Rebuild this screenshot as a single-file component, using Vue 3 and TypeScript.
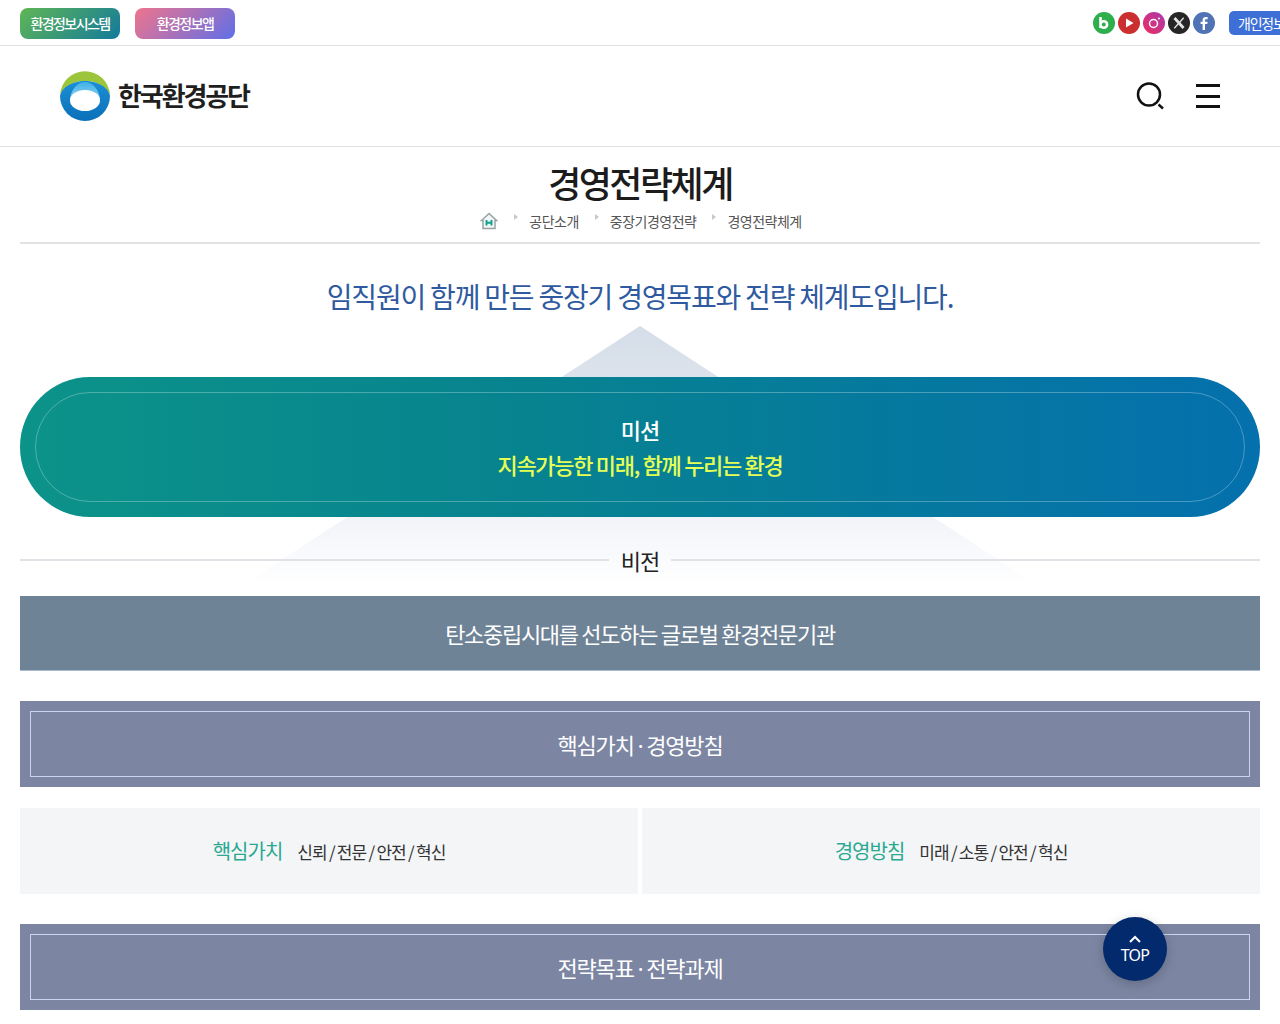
<script setup lang="ts">
const crumbs: string[] = ['공단소개', '중장기경영전략', '경영전략체계']
const cards = [
  { head: '핵심가치', body: '신뢰 / 전문 / 안전 / 혁신' },
  { head: '경영방침', body: '미래 / 소통 / 안전 / 혁신' },
]
</script>

<template>
  <div class="page">
    <div class="topbar">
      <div class="top-left">
        <a class="pill pill-a">환경정보시스템</a>
        <a class="pill pill-b">환경정보앱</a>
      </div>
      <div class="top-right">
        <div class="socials">
          <svg class="soc" viewBox="0 0 22 22"><circle cx="11" cy="11" r="11" fill="#2fae4e"/><path d="M7.500 5v11M7.500 12.500a3.300 3.300 0 1 1 6.600 0a3.300 3.300 0 1 1-6.600 0" fill="none" stroke="#fff" stroke-width="2.600"/></svg>
          <svg class="soc" viewBox="0 0 22 22"><circle cx="11" cy="11" r="11" fill="#c9302f"/><path d="M8 6.500l7.500 4.500L8 15.500z" fill="#fff"/></svg>
          <svg class="soc" viewBox="0 0 22 22"><defs><linearGradient id="ig" x1="0" y1="1" x2="1" y2="0"><stop offset="0" stop-color="#ef2b5f"/><stop offset="1" stop-color="#a93ab0"/></linearGradient></defs><circle cx="11" cy="11" r="11" fill="url(#ig)"/><circle cx="10.500" cy="11.500" r="4" fill="none" stroke="#fff" stroke-width="1.500"/><circle cx="16" cy="6.500" r="1" fill="#fff"/></svg>
          <svg class="soc" viewBox="0 0 22 22"><circle cx="11" cy="11" r="11" fill="#262626"/><path d="M6.500 6l9 10" stroke="#e4e4e4" stroke-width="2.800"/><path d="M15.700 5.800L6.300 16.200" stroke="#e4e4e4" stroke-width="1.300"/></svg>
          <svg class="soc" viewBox="0 0 22 22"><circle cx="11" cy="11" r="11" fill="#4f73b5"/><path d="M12 18v-6h2.300l.3-2.300H12V8.300c0-.7.3-1.100 1.100-1.100h1.500V5.100c-.5-.1-1.200-.1-1.900-.1c-1.900 0-3.100 1.100-3.100 3.100v1.600H7.600V12h2v6z" fill="#fff"/></svg>
        </div>
        <a class="privacy">개인정보처리방침</a>
      </div>
    </div>

    <header class="header">
      <div class="logo">
        <svg class="logo-mark" viewBox="0 0 50 50">
          <defs>
            <linearGradient id="ring" x1="0" y1="0" x2="0" y2="1"><stop offset="0" stop-color="#1c8fd6"/><stop offset="1" stop-color="#0a6fb8"/></linearGradient>
            <linearGradient id="sky" x1="0" y1="0" x2="0" y2="1"><stop offset="0" stop-color="#3fb0e6"/><stop offset="1" stop-color="#8fd4f0"/></linearGradient>
          </defs>
          <path d="M0.100 23A25 25 0 0 1 49.900 23C44 14 35 10 25 10S6 14 0.100 23z" fill="#9cc53c"/>
          <path d="M0 25C1 17 12 10 25 10S49 17 50 25A25 25 0 0 1 0 25z" fill="url(#ring)"/>
          <path d="M10 28C11 18 18 11 25 11S39 18 40 28z" fill="url(#sky)"/>
          <ellipse cx="25" cy="29.500" rx="15" ry="10.500" fill="#fff"/>
        </svg>
        <span class="logo-text">한국환경공단</span>
      </div>
      <div class="tools">
        <svg class="search" viewBox="0 0 30 30"><circle cx="13" cy="13.500" r="11" fill="none" stroke="#111" stroke-width="2.500"/><path d="M22.500 23.500l4.500 4" stroke="#111" stroke-width="2.500"/></svg>
        <div class="burger"><i></i><i></i><i></i></div>
      </div>
    </header>

    <main class="main">
      <div class="titlebox">
        <h1 class="title">경영전략체계</h1>
        <nav class="crumbs">
          <svg class="home" viewBox="0 0 18 18"><path d="M1.500 8.500L9 1.500l7.500 7H15V16.500H3V8.500z" fill="#f3f6f6" stroke="#9aa3a3" stroke-width="1.500"/><path d="M6.500 8v5.500M11.500 8v5.500M6.500 10.700h5" stroke="#12a08e" stroke-width="1.900" fill="none"/></svg>
          <template v-for="c in crumbs" :key="c">
            <span class="caret"></span>
            <span class="crumb">{{ c }}</span>
          </template>
        </nav>
      </div>

      <p class="lead">임직원이 함께 만든 중장기 경영목표와 전략 체계도입니다.</p>

      <div class="diagram">
        <div class="pyramid"></div>
        <section class="mission">
          <div class="mission-inner">
            <div class="mission-head">미션</div>
            <div class="mission-text">지속가능한 미래, 함께 누리는 환경</div>
          </div>
        </section>

        <div class="vision-head"><span>비전</span></div>
        <div class="vision">탄소중립시대를 선도하는 글로벌 환경전문기관</div>

        <div class="band"><div class="band-inner">핵심가치 · 경영방침</div></div>

        <div class="cards">
          <div v-for="c in cards" :key="c.head" class="card">
            <strong class="card-head">{{ c.head }}</strong>
            <span class="card-body">{{ c.body }}</span>
          </div>
        </div>

        <div class="band"><div class="band-inner">전략목표 · 전략과제</div></div>
      </div>
    </main>

    <a class="totop">
      <svg class="chev" viewBox="0 0 12 8"><path d="M1 7l5-5 5 5" fill="none" stroke="#fff" stroke-width="2"/></svg>
      <span>TOP</span>
    </a>
  </div>
</template>

<style>
html, body { margin: 0; overflow: hidden; background: #fff; }
</style>

<style scoped>
.page {
  position: relative;
  height: 1024px;
  overflow: hidden;
  font-family: "Noto Sans CJK KR", "Noto Sans", sans-serif;
  color: #222;
}
.topbar {
  height: 45px;
  border-bottom: 1px solid #e2e2e2;
  display: flex;
  justify-content: space-between;
  align-items: center;
  padding-left: 20px;
}
.top-left { display: flex; gap: 15px; margin-top: 1px; }
.pill {
  width: 100px;
  height: 31px;
  border-radius: 8px;
  color: #fff;
  font-size: 14px;
  font-weight: 500;
  letter-spacing: -1.600px;
  display: flex;
  align-items: center;
  justify-content: center;
}
.pill-a { background: linear-gradient(135deg, #5fb655, #137a9c); }
.pill-b { background: linear-gradient(135deg, #f0748c, #5f6fe8); }
.top-right {
  width: 187px;
  overflow: hidden;
  display: flex;
  align-items: center;
  flex-shrink: 0;
}
.socials { display: flex; gap: 3px; flex-shrink: 0; }
.soc { width: 22px; height: 22px; display: block; }
.privacy {
  margin-left: 14px;
  flex-shrink: 0;
  width: 110px;
  height: 24px;
  border-radius: 5px;
  padding-left: 9px;
  box-sizing: border-box;
  background: #3d6fd6;
  color: #fff;
  font-size: 14px;
  letter-spacing: -1.200px;
  line-height: 24px;
  white-space: nowrap;
}
.header {
  height: 100px;
  border-bottom: 1px solid #e2e2e2;
  display: flex;
  align-items: center;
  justify-content: space-between;
  padding: 0 60px;
}
.logo { display: flex; align-items: center; gap: 8px; }
.logo-mark { width: 50px; height: 50px; display: block; }
.logo-text {
  font-size: 26px;
  font-weight: 700;
  letter-spacing: -2.100px;
  color: #1f1f1f;
  line-height: 1;
  margin-top: -2px;
}
.tools { display: flex; align-items: center; gap: 30px; }
.search { width: 30px; height: 30px; display: block; }
.burger { width: 24px; display: flex; flex-direction: column; gap: 7.500px; }
.burger i { display: block; height: 3px; background: #111; }
.main { padding: 0 20px; }
.titlebox {
  height: 95px;
  border-bottom: 2px solid #e2e2e2;
  display: flex;
  flex-direction: column;
  align-items: center;
}
.title {
  margin: 10px 0 0;
  font-size: 36px;
  line-height: 50px;
  font-weight: 500;
  letter-spacing: -2.500px;
  color: #1c1c1c;
}
.crumbs {
  display: flex;
  align-items: center;
  margin: 4px 0 0 2px;
  font-size: 14px;
  letter-spacing: -0.500px;
  color: #555;
}
.home { width: 18px; height: 18px; }
.caret {
  width: 0;
  height: 0;
  margin: -8px 11px 0 16px;
  border-left: 4px solid #c8c8c8;
  border-top: 3px solid transparent;
  border-bottom: 3px solid transparent;
}
.lead {
  margin: 30px 0 0;
  text-align: center;
  font-size: 28px;
  line-height: 44px;
  letter-spacing: -1.200px;
  color: #2f5aa0;
}
.diagram { position: relative; padding-top: 59px; }
.pyramid {
  position: absolute;
  left: 160px;
  top: 8px;
  width: 920px;
  height: 300px;
  clip-path: polygon(50% 0, 100% 100%, 0 100%);
  background: linear-gradient(to bottom, #d4dde8, #f1f3f8 63%, #fafbfd 78%, #ffffff 86%);
}
.mission {
  position: relative;
  height: 140px;
  border-radius: 70px;
  background: linear-gradient(90deg, #0c9389, #07838f 40%, #0470ad);
  padding: 15px;
  box-sizing: border-box;
}
.mission-inner {
  height: 110px;
  border: 1px solid rgba(255, 255, 255, 0.28);
  border-radius: 55px;
  text-align: center;
  box-sizing: border-box;
  padding-top: 19px;
}
.mission-head {
  color: #fff;
  font-size: 22px;
  line-height: 35px;
  font-weight: 500;
  letter-spacing: -1px;
}
.mission-text {
  color: #e6ff55;
  font-size: 22px;
  line-height: 35px;
  font-weight: 500;
  letter-spacing: -1.300px;
}
.vision-head {
  position: relative;
  height: 79px;
  padding-top: 6px;
  box-sizing: border-box;
  display: flex;
  align-items: center;
  gap: 12px;
  font-size: 22px;
  letter-spacing: -1px;
  color: #222;
}
.vision-head::before,
.vision-head::after {
  content: "";
  flex: 1;
  height: 2px;
  margin-top: 1px;
  background: #dfe2e6;
}
.vision {
  position: relative;
  height: 75px;
  background: #6f8397;
  border-bottom: 1px solid #a9bcd0;
  box-sizing: border-box;
  display: flex;
  align-items: center;
  justify-content: center;
  color: #fff;
  font-size: 22px;
  letter-spacing: -1.300px;
}
.band {
  position: relative;
  height: 86px;
  margin-top: 30px;
  padding: 10px;
  box-sizing: border-box;
  background: #7c86a2;
}
.band-inner {
  height: 66px;
  padding-bottom: 1px;
  border: 1px solid #ccd5ef;
  box-sizing: border-box;
  display: flex;
  align-items: center;
  justify-content: center;
  color: #fff;
  font-size: 22px;
  letter-spacing: -1.200px;
  word-spacing: -3px;
}
.cards {
  position: relative;
  display: grid;
  grid-template-columns: 1fr 1fr;
  gap: 4px;
  margin-top: 21px;
}
.card {
  height: 86px;
  background: #f3f5f7;
  display: flex;
  align-items: center;
  justify-content: center;
  gap: 15px;
}
.card-head {
  font-size: 20px;
  font-weight: 400;
  letter-spacing: -1px;
  color: #2aa890;
  margin-top: -1px;
}
.card-body {
  font-size: 17px;
  letter-spacing: -1px;
  color: #333;
  word-spacing: -0.500px;
}
.totop {
  position: absolute;
  left: 1103px;
  top: 917px;
  width: 64px;
  height: 64px;
  border-radius: 50%;
  background: #042a6e;
  box-shadow: 0 3px 12px rgba(0, 0, 0, 0.2);
  color: #fff;
  display: flex;
  flex-direction: column;
  align-items: center;
  justify-content: center;
  font-family: "Noto Sans", sans-serif;
  font-size: 16px;
  letter-spacing: -0.800px;
  line-height: 18px;
}
.chev { width: 12px; height: 8px; margin-bottom: 3px; }
</style>
